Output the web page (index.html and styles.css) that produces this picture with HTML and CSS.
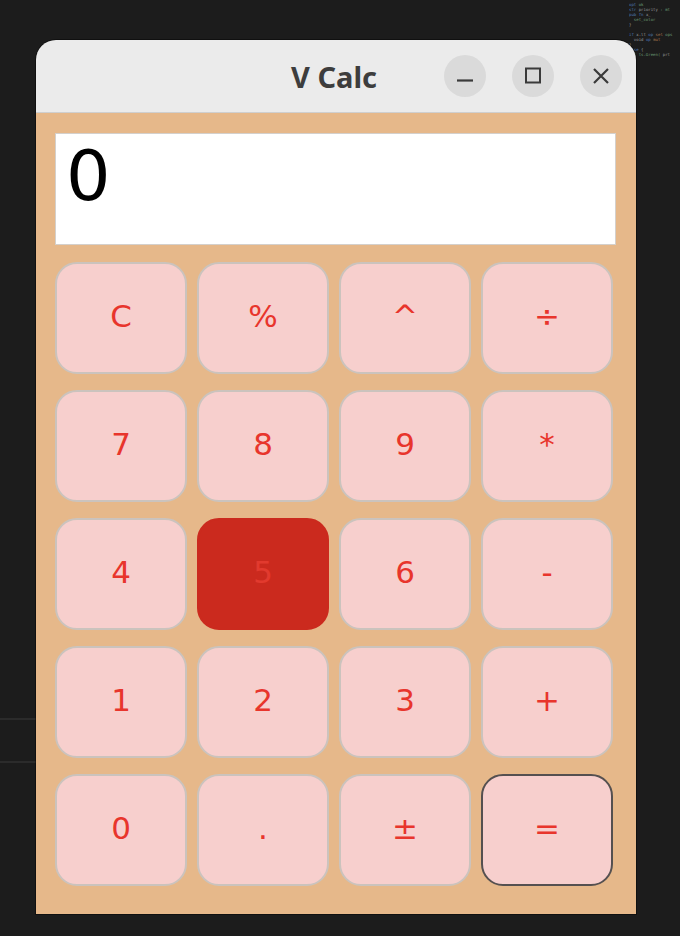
FILE: index.html
```html
<!DOCTYPE html>
<html>
<head>
<meta charset="utf-8">
<link rel="stylesheet" href="styles.css">
</head>
<body>
<div class="desktop">
  <div class="code">
    <div class="cl"><span class="k">opt</span> <span class="g">ok</span></div>
    <div class="cl"><span class="k">str</span> <span class="w">priority</span> <span class="g">: mt</span></div>
    <div class="cl"><span class="k">pub fn</span> <span class="w">x_</span></div>
    <div class="cl">&nbsp;&nbsp;<span class="g">set_color</span></div>
    <div class="cl"><span class="w">}</span></div>
    <div class="cl">&nbsp;</div>
    <div class="cl"><span class="k">if</span> <span class="w">x.lt</span> <span class="k">op</span> <span class="r">sel</span> <span class="g">ops</span></div>
    <div class="cl">&nbsp;&nbsp;<span class="w">void</span> <span class="k">op</span> <span class="r">mut</span></div>
    <div class="cl"><span class="w">}</span></div>
    <div class="cl"><span class="k">else</span> <span class="w">{</span></div>
    <div class="cl">&nbsp;&nbsp;<span class="g">" ts.Green(</span> <span class="w">prt</span></div>
  </div>
  <div class="line line-a"></div>
  <div class="line line-b"></div>

  <div class="window">
    <div class="titlebar">
      <div class="title">V Calc</div>
      <div class="controls">
        <div class="ctl">
          <svg width="20" height="20" viewBox="0 0 20 20"><path d="M2 14.5h16" stroke="#3a3a3a" stroke-width="2.2" fill="none"/></svg>
        </div>
        <div class="ctl">
          <svg width="20" height="20" viewBox="0 0 20 20"><rect x="3" y="2.5" width="14" height="14" stroke="#3a3a3a" stroke-width="2" fill="none"/></svg>
        </div>
        <div class="ctl">
          <svg width="20" height="20" viewBox="0 0 20 20"><path d="M3 3L17 17M17 3L3 17" stroke="#3a3a3a" stroke-width="2.2" fill="none"/></svg>
        </div>
      </div>
    </div>
    <div class="body">
      <div class="display">0</div>
      <div class="keys">
        <button class="key">C</button>
        <button class="key">%</button>
        <button class="key">^</button>
        <button class="key">÷</button>
        <button class="key">7</button>
        <button class="key">8</button>
        <button class="key">9</button>
        <button class="key">*</button>
        <button class="key">4</button>
        <button class="key pressed">5</button>
        <button class="key">6</button>
        <button class="key">-</button>
        <button class="key">1</button>
        <button class="key">2</button>
        <button class="key">3</button>
        <button class="key">+</button>
        <button class="key">0</button>
        <button class="key">.</button>
        <button class="key">±</button>
        <button class="key focus">=</button>
      </div>
    </div>
  </div>
</div>
</body>
</html>
```

FILE: styles.css
```css
html, body {
  margin: 0;
  padding: 0;
  background: #1b1b1b;
}
.desktop {
  position: relative;
  width: 680px;
  height: 936px;
  overflow: hidden;
  background: #1c1c1c;
}
.code {
  position: absolute;
  left: 629px;
  top: 2px;
  font-family: "DejaVu Sans Mono", monospace;
  font-size: 4px;
  line-height: 5px;
  white-space: nowrap;
  opacity: 0.8;
}
.code .k { color: #5b8fd6; }
.code .g { color: #7fb88a; }
.code .w { color: #b8b8b8; }
.code .r { color: #c98a5a; }
.line {
  position: absolute;
  left: 0;
  width: 36px;
  height: 2px;
  background: #2b2b2b;
}
.line-a { top: 718px; }
.line-b { top: 761px; }

.window {
  position: absolute;
  left: 36px;
  top: 40px;
  width: 600px;
  display: flex;
  flex-direction: column;
  box-shadow: 0 0 0 1px rgba(0,0,0,0.4);
  border-radius: 20px 20px 0 0;
}
.titlebar {
  height: 72px;
  background: #ebebeb;
  border-radius: 20px 20px 0 0;
  border-bottom: 1px solid #cfcfcf;
  position: relative;
  display: flex;
  align-items: center;
  justify-content: center;
}
.title {
  font-family: "Noto Sans", sans-serif;
  font-weight: 700;
  font-size: 29px;
  color: #3d3d3d;
  margin-top: 1px;
  margin-left: -4px;
}
.controls {
  position: absolute;
  right: 14px;
  top: 15px;
  display: flex;
  gap: 26px;
}
.ctl {
  width: 42px;
  height: 42px;
  border-radius: 50%;
  background: #dadada;
  display: flex;
  align-items: center;
  justify-content: center;
}
.body {
  background: #e6b88a;
  padding: 20px 19px 28px 19px;
  display: flex;
  flex-direction: column;
  gap: 17px;
}
.display {
  height: 112px;
  box-sizing: border-box;
  width: 561px;
  background: #ffffff;
  border: 1px solid #d4d0cc;
  font-family: "DejaVu Sans", sans-serif;
  font-size: 70px;
  line-height: 1;
  color: #000;
  padding: 7px 0 0 10px;
}
.keys {
  display: grid;
  grid-template-columns: repeat(4, 132px);
  grid-auto-rows: 112px;
  column-gap: 10px;
  row-gap: 16px;
}
.key {
  margin: 0;
  padding: 0 0 4px 0;
  background: #f7cfcd;
  border: 2px solid #cbc3bd;
  border-radius: 22px;
  font-family: "DejaVu Sans", sans-serif;
  font-size: 31px;
  color: #e8352c;
  display: flex;
  align-items: center;
  justify-content: center;
}
.key.pressed {
  background: #cb2a1e;
  border-color: #cb2a1e;
  color: #e23a2e;
}
.key.focus {
  border-color: #555050;
}
```
